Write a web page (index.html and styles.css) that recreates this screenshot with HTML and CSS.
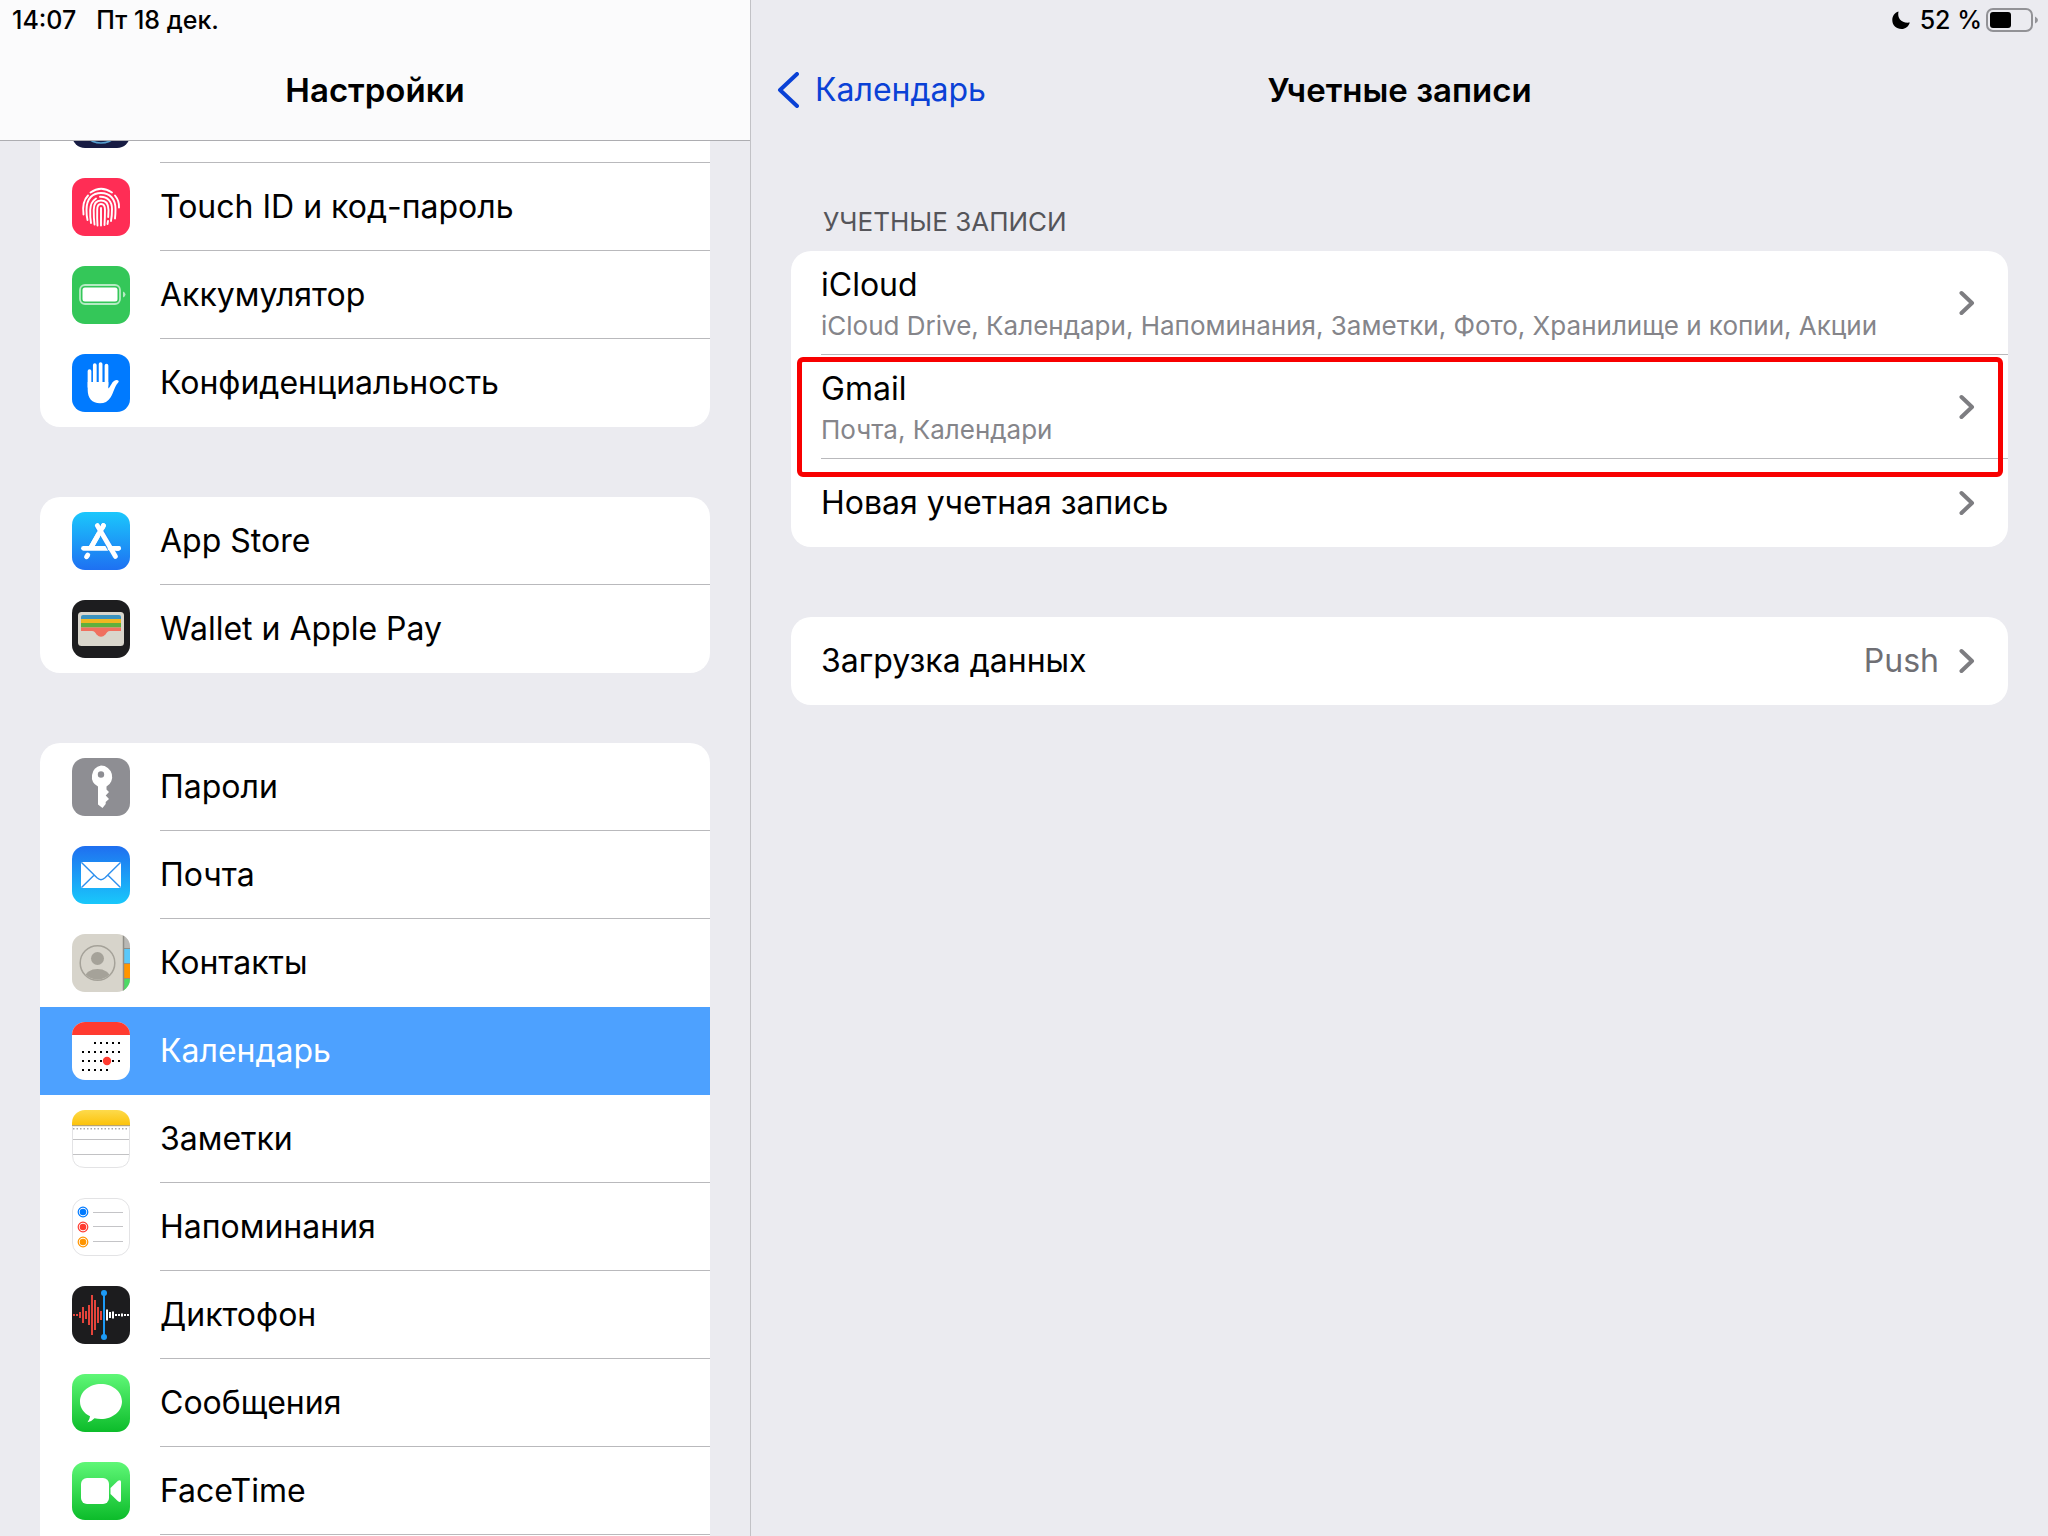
FILE: index.html
```html
<!DOCTYPE html>
<html lang="ru">
<head>
<meta charset="utf-8">
<meta name="viewport" content="width=device-width, initial-scale=1">
<title>Настройки</title>
<link rel="stylesheet" href="styles.css">
</head>
<body>
<div class="app">
  <aside class="sidebar">
    <header class="sidebar-header">
      <div class="status"><span>14:07</span><span>Пт 18 дек.</span></div>
      <h1 class="title">Настройки</h1>
    </header>
    <nav class="menu">
      <ul class="group group-first">
        <li><a class="item" href="#" aria-label="Siri">
          <svg class="icon" viewBox="0 0 58 58"><rect width="58" height="58" rx="13" fill="#171c43"/><circle cx="29" cy="32" r="21" fill="#14204d" stroke="#56a0cf" stroke-width="1.5"/><circle cx="29" cy="31" r="19" fill="#1b6aa5"/></svg>
          <span class="label"></span></a></li>
        <li><a class="item" href="#">
          <svg class="icon" viewBox="0 0 58 58"><rect width="58" height="58" rx="13" fill="#ff2d55"/><g fill="none" stroke="#fff" stroke-width="1.9" stroke-linecap="round"><path d="M18.500 14.500Q29 7 40 14.500"/><path d="M11.500 36.500C10.500 29 11 22.500 16 17.500"/><path d="M43 17.500Q47.500 23 47 29.500"/><path d="M15.500 42Q14.500 38 14.500 32C14.500 20 21 15 29 15C38 15 43.500 21 43.500 31Q43.500 37 43 40.500"/><path d="M19 45Q18 40 18.200 32Q18.500 24 24 20.500"/><path d="M28 18.800C36 18.500 40 24 40 31Q40 38 39 43"/><path d="M22.500 46.500Q21.700 40 21.700 32C21.700 26 24.500 22.500 29 22.500C34 22.500 36.500 26 36.500 32L36.200 39"/><path d="M25.500 47.500Q25 41 25.200 32C25.200 28 26.500 26 29 26C31.800 26 33 28 33 32Q33 39 32.500 47"/><path d="M29 30V47.500M36 43L35.500 46"/></g></svg>
          <span class="label">Touch ID и код-пароль</span></a></li>
        <li><a class="item" href="#">
          <svg class="icon" viewBox="0 0 58 58"><rect width="58" height="58" rx="13" fill="#34c759"/><rect x="8" y="19" width="40" height="19" rx="5" fill="none" stroke="#b5ebc3" stroke-width="1.800"/><rect x="10.500" y="21.500" width="35" height="14" rx="2.500" fill="#fff"/><path d="M51 25.500Q53.500 26.500 53.500 28.500Q53.500 30.500 51 31.500Z" fill="#b5ebc3"/></svg>
          <span class="label">Аккумулятор</span></a></li>
        <li><a class="item" href="#">
          <svg class="icon" viewBox="0 0 58 58"><rect width="58" height="58" rx="13" fill="#007aff"/><path d="M17.500 17V33M22.800 11V30M28.600 10V30M34.500 11.500V31" stroke="#fff" stroke-width="3.700" stroke-linecap="round"/><path d="M15.700 28H36.300V34.500C38.500 33 39.500 28.500 42 27Q44.500 25.500 46.300 26.500Q47.500 27.500 45.800 29C43 31.500 41.500 39 38.500 43.500C36 47.500 32.500 49.300 28 49.300C20 49.300 15.700 44 15.700 36Z" fill="#fff"/></svg>
          <span class="label">Конфиденциальность</span></a></li>
      </ul>
      <ul class="group">
        <li><a class="item" href="#">
          <svg class="icon" viewBox="0 0 58 58"><defs><linearGradient id="store" x2="0" y2="1"><stop stop-color="#1bc7fc"/><stop offset="1" stop-color="#1e70f2"/></linearGradient></defs><rect width="58" height="58" rx="13" fill="url(#store)"/><g fill="none" stroke="#fff" stroke-width="4.800" stroke-linecap="round"><path d="M11.500 36.300H46.500"/><path d="M31.500 13.500L19 35.500M15.800 43L14.500 44.800"/></g><path d="M25.300 13.500L43.500 44.500" stroke="#2090f8" stroke-width="7"/><path d="M25.300 13.500L43.500 44.500" stroke="#fff" stroke-width="4.800" stroke-linecap="round"/><path d="M31.500 13.500L19 35.500M38 36.300H46.500" stroke="#fff" stroke-width="4.800" stroke-linecap="round"/></svg>
          <span class="label">App Store</span></a></li>
        <li><a class="item" href="#">
          <svg class="icon" viewBox="0 0 58 58"><rect width="58" height="58" rx="13" fill="#1d1d1f"/><rect x="6" y="12" width="46" height="34" rx="3.500" fill="#d9d6cc"/><path d="M9 19V17Q9 15 11 15H47Q49 15 49 17V19Z" fill="#3b93be"/><path d="M9 19H49V23H9Z" fill="#efb721"/><path d="M9 23H49V27.500H9Z" fill="#5fb03d"/><path d="M9 27.500H49V31H38C35.500 31 35 32.500 33.500 34.500Q29 39 24.500 34.500C23 32.500 22.500 31 20 31H9Z" fill="#f0705f"/></svg>
          <span class="label">Wallet и Apple Pay</span></a></li>
      </ul>
      <ul class="group group-open">
        <li><a class="item" href="#">
          <svg class="icon" viewBox="0 0 58 58"><rect width="58" height="58" rx="13" fill="#8e8e93"/><path fill="#fff" fill-rule="evenodd" d="M29 7.500A11.300 11.300 0 0 1 34.500 28.600V31.500L37 34L33.700 37.500L37 41L33.700 44V46L30.500 50L26 46.500V28.600A11.300 11.300 0 0 1 29 7.500ZM29 13.300A3.200 3.200 0 1 0 29 19.700A3.200 3.200 0 1 0 29 13.300Z"/></svg>
          <span class="label">Пароли</span></a></li>
        <li><a class="item" href="#">
          <svg class="icon" viewBox="0 0 58 58"><defs><linearGradient id="mail" x2="0" y2="1"><stop stop-color="#1f6ff0"/><stop offset="1" stop-color="#19c8fb"/></linearGradient></defs><rect width="58" height="58" rx="13" fill="url(#mail)"/><rect x="9" y="16" width="40" height="26" rx="1.500" fill="#fff"/><path d="M9.500 16.500L25 31.800Q29 35.500 33 31.800L48.500 16.500M9.500 41.500L22 29.200M48.500 41.500L36 29.200" fill="none" stroke="#2c8fee" stroke-width="1.400"/></svg>
          <span class="label">Почта</span></a></li>
        <li><a class="item item-joined" href="#">
          <svg class="icon" viewBox="0 0 58 58"><defs><clipPath id="tile"><rect width="58" height="58" rx="13"/></clipPath><clipPath id="face"><circle cx="25.500" cy="29" r="16.500"/></clipPath></defs><g clip-path="url(#tile)"><path d="M0 0H58V58H0Z" fill="#d7d4cb"/><path d="M51 0H58V15H51Z" fill="#b9b8b5"/><path d="M51 15H58V29H51Z" fill="#5ac8fa"/><path d="M51 29H58V45H51Z" fill="#ff9500"/><path d="M51 45H58V58H51Z" fill="#4cd964"/><path d="M51 14.500H58M51 29.500H58M51 44.500H58" stroke="#918f86" stroke-width="1.200"/><path d="M51.500 0V58" stroke="#908e88" stroke-width="1.500"/></g><g clip-path="url(#face)" fill="#a5a299"><circle cx="25.500" cy="24.500" r="6.500"/><ellipse cx="25.500" cy="43.500" rx="12.500" ry="8.500"/></g><circle cx="25.500" cy="29" r="17.300" fill="none" stroke="#a5a299" stroke-width="1.500"/></svg>
          <span class="label">Контакты</span></a></li>
        <li><a class="item item-joined item-selected" href="#" aria-current="page">
          <svg class="icon" viewBox="0 0 58 58"><g clip-path="url(#tile)"><path d="M0 0H58V58H0Z" fill="#fff"/><path d="M0 0H58V13H0Z" fill="#ff3b30"/></g><g stroke="#000" stroke-width="2" stroke-dasharray="2 4"><path d="M22 21H48M10 30H48M10 39H48M10 48H36"/></g><circle cx="35" cy="39" r="4.200" fill="#ff3b30"/></svg>
          <span class="label">Календарь</span></a></li>
        <li><a class="item" href="#">
          <svg class="icon" viewBox="0 0 58 58"><defs><linearGradient id="notes" x2="0" y2="1"><stop stop-color="#fdda4c"/><stop offset="1" stop-color="#fcc30b"/></linearGradient></defs><g clip-path="url(#tile)"><path d="M0 0H58V58H0Z" fill="#fff"/><path d="M0 0H58V15H0Z" fill="url(#notes)"/><path d="M0 15.700H58" stroke="#a58f55"/><path d="M1 18.800H58" stroke="#aaa" stroke-width="1.500" stroke-dasharray="1.500 2"/><path d="M0 29.500H58M0 44.500H58" stroke="#c2c2c4"/></g><path d="M.5 16V45Q.5 57.500 13 57.500H45Q57.500 57.500 57.500 45V16" fill="none" stroke="#e3e3e5"/></svg>
          <span class="label">Заметки</span></a></li>
        <li><a class="item" href="#">
          <svg class="icon" viewBox="0 0 58 58"><rect x=".5" y=".5" width="57" height="57" rx="12.500" fill="#fff" stroke="#e3e3e5"/><g stroke-width="1.200" fill="none"><circle cx="11" cy="14" r="4.800" stroke="#007aff"/><circle cx="11" cy="29" r="4.800" stroke="#ff3b30"/><circle cx="11" cy="44" r="4.800" stroke="#ff9500"/></g><circle cx="11" cy="14" r="3.300" fill="#007aff"/><circle cx="11" cy="29" r="3.300" fill="#ff3b30"/><circle cx="11" cy="44" r="3.300" fill="#ff9500"/><path d="M21 14.500H51M21 28.500H51M21 43.500H51" stroke="#c4c4c7"/></svg>
          <span class="label">Напоминания</span></a></li>
        <li><a class="item" href="#">
          <svg class="icon" viewBox="0 0 58 58"><rect width="58" height="58" rx="13" fill="#1c1c1e"/><path d="M2 28V30M5 28V30M8 26V32M11 21V37M14 25V33M17 19V39M20 9V49M23 14V44M26 21V37M29 25V34" stroke="#e5443b" stroke-width="2"/><path d="M35 23.500V34.500M38 26V32M41 25.500V32.500M44 28V30M47 28V30M50 27.500V30.500M53 28V30M56 28V30" stroke="#fff" stroke-width="2"/><path d="M32 7V51" stroke="#1d9bf6" stroke-width="2"/><circle cx="32" cy="7" r="3" fill="#1d9bf6"/><circle cx="32" cy="51" r="3" fill="#1d9bf6"/></svg>
          <span class="label">Диктофон</span></a></li>
        <li><a class="item" href="#">
          <svg class="icon" viewBox="0 0 58 58"><defs><linearGradient id="green" x2="0" y2="1"><stop stop-color="#5ff777"/><stop offset="1" stop-color="#0cbc2a"/></linearGradient></defs><rect width="58" height="58" rx="13" fill="url(#green)"/><path fill="#fff" d="M29 10C40.500 10 50 17.500 50 27.500S40.500 45 29 45Q25.500 45 22.500 44.200Q19.500 47.500 15.500 48.200Q17.800 45.500 18 42.300C12 39.500 8 34 8 27.500C8 17.500 17.500 10 29 10Z"/></svg>
          <span class="label">Сообщения</span></a></li>
        <li><a class="item" href="#">
          <svg class="icon" viewBox="0 0 58 58"><rect width="58" height="58" rx="13" fill="url(#green)"/><rect x="9" y="16" width="28" height="26" rx="6" fill="#fff"/><path d="M38.500 26L46 18.800Q49 17 49 20V38Q49 41 46 39.200L38.500 32Z" fill="#fff"/></svg>
          <span class="label">FaceTime</span></a></li>
      </ul>
    </nav>
  </aside>
  <main class="detail">
    <div class="status status-end">
      <svg class="moon" viewBox="0 0 18 20" aria-hidden="true"><path d="M6.500 1.500C5 8.500 9.500 13.500 17.800 12.500C16.500 16.800 13.500 19 9.500 19C4.300 19 .3 15.300 .3 10.300C.3 6 2.500 2.800 6.500 1.500Z"/></svg>
      <span>52 %</span>
      <svg class="battery" viewBox="0 0 52 24" aria-hidden="true"><rect x="1" y="1" width="45" height="22" rx="6" fill="none" stroke="#929296" stroke-width="2"/><rect x="4" y="4" width="21" height="16" rx="3" fill="#000"/><path d="M49 8.500Q52 10 52 12Q52 14 49 15.500Z" fill="#929296"/></svg>
    </div>
    <header class="navbar">
      <a class="back" href="#"><svg class="back-arrow" viewBox="0 0 22 36" aria-hidden="true"><path d="M20 2L3 18L20 34" fill="none" stroke="#0a41d6" stroke-width="4" stroke-linecap="round" stroke-linejoin="round"/></svg>Календарь</a>
      <h2 class="title">Учетные записи</h2>
    </header>
    <section class="content">
      <h3 class="caption">Учетные записи</h3>
      <ul class="card">
        <li><a class="row row-tall" href="#"><span class="text"><span class="name">iCloud</span><span class="sub">iCloud Drive, Календари, Напоминания, Заметки, Фото, Хранилище и копии, Акции</span></span><svg class="chevron" viewBox="0 0 16 26"><path d="M2.500 3L13 13L2.500 23"/></svg></a></li>
        <li class="marked"><a class="row row-tall" href="#"><span class="text"><span class="name">Gmail</span><span class="sub">Почта, Календари</span></span><svg class="chevron" viewBox="0 0 16 26"><path d="M2.500 3L13 13L2.500 23"/></svg></a></li>
        <li><a class="row" href="#"><span class="text">Новая учетная запись</span><svg class="chevron" viewBox="0 0 16 26"><path d="M2.500 3L13 13L2.500 23"/></svg></a></li>
      </ul>
      <ul class="card">
        <li><a class="row" href="#"><span class="text">Загрузка данных</span><span class="value">Push</span><svg class="chevron" viewBox="0 0 16 26"><path d="M2.500 3L13 13L2.500 23"/></svg></a></li>
      </ul>
    </section>
  </main>
</div>
</body>
</html>
```
FILE: styles.css
```css
* { box-sizing: border-box; }

body {
  margin: 0;
  background: #ebebf0;
  color: #000;
  font: 400 32px/40px Inter, "Noto Sans", sans-serif;
}

ul, h1, h2, h3 { margin: 0; padding: 0; }
ul { list-style: none; }
a { color: inherit; text-decoration: none; }
svg { display: block; flex: none; }

.app { display: flex; height: 100vh; }

.sidebar {
  display: flex;
  flex-direction: column;
  width: 36.67%;
  overflow: hidden;
  border-right: 1px solid #c2c2c6;
}

.sidebar-header {
  position: relative;
  z-index: 1;
  flex: none;
  height: 141px;
  background: #fbfbfc;
  border-bottom: 1px solid #adadb1;
}

.status {
  display: flex;
  align-items: center;
  gap: 20px;
  height: 40px;
  padding: 0 12px;
  font-size: 25px;
  font-weight: 500;
}

.status-end { justify-content: flex-end; gap: 4px; padding: 0 10px; }
.moon { width: 18px; height: 20px; margin-right: 6px; }
.battery { width: 52px; height: 24px; }

.title {
  font-size: 33px;
  font-weight: 600;
  line-height: 100px;
  text-align: center;
}

.menu {
  display: flex;
  flex: 1;
  flex-direction: column;
  gap: 70px;
  min-height: 0;
  padding: 0 40px;
}

.group { background: #fff; border-radius: 20px; }
/* The list is scrolled: its first row sits partly under the header. */
.group-first { margin-top: -66px; }
.group-open { flex: 1; border-radius: 20px 20px 0 0; }

.item {
  display: flex;
  align-items: center;
  gap: 30px;
  height: 88px;
  padding-left: 32px;
}

.icon { width: 58px; height: 58px; }

.label {
  flex: 1;
  height: 88px;
  line-height: 88px;
  border-bottom: 1px solid #b9b9bc;
}

.group:not(.group-open) li:last-child .label,
.item-joined .label { border-bottom: 0; }

.item-selected { background: #4da1ff; color: #fff; }

.detail { flex: 1; min-width: 0; }

.navbar {
  display: grid;
  grid-template-columns: 1fr auto 1fr;
  align-items: center;
  height: 100px;
  padding: 0 26px;
}

.back { display: flex; align-items: center; gap: 16px; color: #0a41d6; }
.back-arrow { width: 22px; height: 36px; }

.content {
  display: flex;
  flex-direction: column;
  padding: 62px 40px;
}

.caption {
  padding: 0 32px 9px;
  color: #55555a;
  font-size: 26px;
  font-weight: 400;
  text-transform: uppercase;
}

.card { background: #fff; border-radius: 20px; }
.card + .card { margin-top: 70px; }

.row {
  display: flex;
  align-items: center;
  height: 88px;
  margin-left: 30px;
  padding-right: 33px;
}

.row-tall { height: 104px; border-bottom: 1px solid #b9b9bc; }

.text { flex: 1; }
.row-tall .text { padding-top: 2px; }
.name, .sub { display: block; }
.name { line-height: 44px; }
.sub { color: #85858a; font-size: 26px; line-height: 38px; }
.value { margin-right: 20px; color: #6f6f74; }

.chevron { width: 16px; height: 26px; }
.chevron path {
  fill: none;
  stroke: #7d7d81;
  stroke-width: 4;
  stroke-linecap: round;
  stroke-linejoin: round;
}

.marked { position: relative; }
.marked::after {
  content: "";
  position: absolute;
  inset: 2px 5px -18px 6px;
  border: 5px solid #f80000;
  border-radius: 6px;
  pointer-events: none;
}
```
